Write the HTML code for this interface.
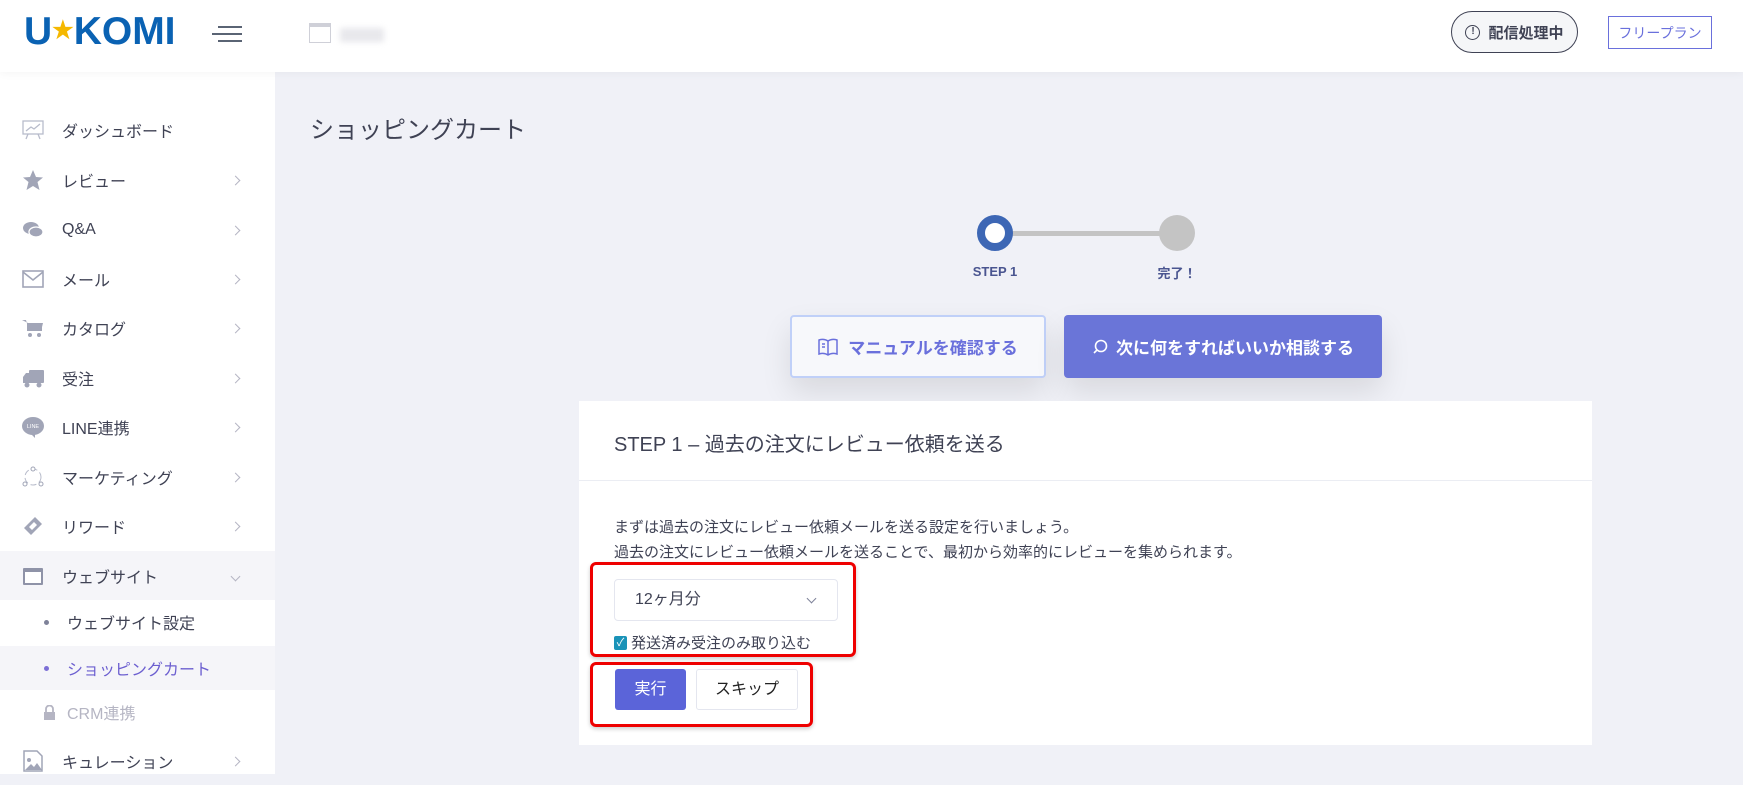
<!DOCTYPE html>
<html><head><meta charset="utf-8"><style>
*{box-sizing:border-box;margin:0;padding:0}
body{width:1743px;height:774px;overflow:hidden;background:#f0f1f7;font-family:"Liberation Sans","Noto Sans CJK JP",sans-serif;color:#3f4254;position:relative}
.abs{position:absolute}
#hdr{left:0;top:0;width:1743px;height:72px;background:#fff;box-shadow:0 2px 8px rgba(0,0,0,.04);z-index:2}
#side{left:0;top:72px;width:275px;height:702px;background:#fff}
.mi{position:absolute;left:0;width:275px;height:49px;display:flex;align-items:center;font-size:16px;color:#3f4254}
.mi .ic{position:absolute;left:22px;width:22px;height:22px}
.mi .tx{position:absolute;left:62px}
.mi .ch{position:absolute;left:232px;color:#b5b5c3;font-size:13px}
.chev{display:inline-block;width:7px;height:7px;border-right:1.3px solid #b5b5c3;border-top:1.3px solid #b5b5c3;transform:rotate(45deg)}
.sub{position:absolute;left:0;width:275px;height:44px;display:flex;align-items:center;font-size:16px}
.sub .dot{position:absolute;left:44px;width:5px;height:5px;border-radius:50%;background:#7e8299}
.sub .tx{position:absolute;left:67px}
</style></head><body>
<div id="hdr" class="abs">
  <div class="abs" style="left:24px;top:10px;font-size:39px;font-weight:bold;color:#0a62b3;letter-spacing:0px;font-family:'Liberation Sans',sans-serif">U<span style="color:#f5b800;font-size:24px;vertical-align:6px">★</span>KOMI</div>
  <div class="abs" style="left:218px;top:26px;width:24px;height:2px;background:#5a6474"></div>
  <div class="abs" style="left:212px;top:33px;width:30px;height:2px;background:#5a6474"></div>
  <div class="abs" style="left:218px;top:40px;width:24px;height:2px;background:#5a6474"></div>
  <div class="abs" style="left:309px;top:23px;width:22px;height:20px;border:1.5px solid #cfd0d8;border-top-width:4px"></div>
  <div class="abs" style="left:340px;top:28px;width:44px;height:14px;background:#e8e8ec;filter:blur(3px)"></div>
  <div class="abs" style="left:1451px;top:11px;width:127px;height:42px;border:1.5px solid #3f4254;border-radius:21px;background:#f5f6f8;display:flex;align-items:center;justify-content:center;font-size:15px;font-weight:bold;color:#3f4254">
    <span style="display:inline-block;width:15px;height:15px;border:1.5px solid #3f4254;border-radius:50%;font-size:10px;line-height:12px;text-align:center;margin-right:8px">!</span>配信処理中</div>
  <div class="abs" style="left:1608px;top:16px;width:104px;height:33px;border:1.5px solid #6a70dc;display:flex;align-items:center;justify-content:center;font-size:14px;color:#6a70dc">フリープラン</div>
</div>
<div id="side" class="abs">
  <div class="mi" style="top:33px"><svg class="ic" viewBox="0 0 22 22"><rect x="1" y="2" width="20" height="13" fill="none" stroke="#b8bccb" stroke-width="1.3"/><path d="M4 12l5-4 3 2 6-5M6 15l-2 5M16 15l2 5" fill="none" stroke="#b8bccb" stroke-width="1.3"/></svg><span class="tx">ダッシュボード</span></div>
  <div class="mi" style="top:83px"><svg class="ic" viewBox="0 0 22 22"><path d="M11 1l3 7 7 .5-5.5 4.5 2 8L11 17l-6.5 4 2-8L1 8.5 8 8z" fill="#a1a5b7"/></svg><span class="tx">レビュー</span><span class="ch"><i class="chev"></i></span></div>
  <div class="mi" style="top:133px"><svg class="ic" viewBox="0 0 22 22"><ellipse cx="9" cy="9" rx="8" ry="6" fill="#a1a5b7"/><ellipse cx="14" cy="13" rx="7" ry="5" fill="#a1a5b7" stroke="#fff" stroke-width="1.3"/></svg><span class="tx">Q&amp;A</span><span class="ch"><i class="chev"></i></span></div>
  <div class="mi" style="top:182px"><svg class="ic" viewBox="0 0 22 22"><rect x="1" y="3" width="20" height="16" fill="none" stroke="#a1a5b7" stroke-width="1.6"/><path d="M1 4l10 8 10-8" fill="none" stroke="#a1a5b7" stroke-width="1.6"/></svg><span class="tx">メール</span><span class="ch"><i class="chev"></i></span></div>
  <div class="mi" style="top:231px"><svg class="ic" viewBox="0 0 22 22"><path d="M0 3h4l3 11h12l2-8H6" fill="#a1a5b7"/><rect x="5" y="6" width="15" height="8" fill="#a1a5b7"/><circle cx="8" cy="18" r="2" fill="#a1a5b7"/><circle cx="17" cy="18" r="2" fill="#a1a5b7"/></svg><span class="tx">カタログ</span><span class="ch"><i class="chev"></i></span></div>
  <div class="mi" style="top:281px"><svg class="ic" viewBox="0 0 22 22"><rect x="7" y="3" width="15" height="13" rx="1" fill="#a1a5b7"/><path d="M1 10l3-4h4v10H1z" fill="#a1a5b7"/><circle cx="5" cy="18" r="2.5" fill="#a1a5b7"/><circle cx="17" cy="18" r="2.5" fill="#a1a5b7"/></svg><span class="tx">受注</span><span class="ch"><i class="chev"></i></span></div>
  <div class="mi" style="top:330px"><svg class="ic" viewBox="0 0 22 22"><ellipse cx="11" cy="10" rx="11" ry="9" fill="#a1a5b7"/><path d="M9 18l4 4v-4z" fill="#a1a5b7"/><text x="11" y="12" font-size="5.5" fill="#fff" text-anchor="middle" font-family="Liberation Sans">LINE</text></svg><span class="tx">LINE連携</span><span class="ch"><i class="chev"></i></span></div>
  <div class="mi" style="top:380px"><svg class="ic" viewBox="0 0 22 22"><circle cx="11" cy="11" r="8" fill="none" stroke="#b8bccb" stroke-width="1" stroke-dasharray="6 3"/><circle cx="11" cy="3" r="2" fill="#fff" stroke="#a1a5b7"/><circle cx="3" cy="18" r="2" fill="#fff" stroke="#a1a5b7"/><circle cx="19" cy="18" r="2" fill="#fff" stroke="#a1a5b7"/></svg><span class="tx">マーケティング</span><span class="ch"><i class="chev"></i></span></div>
  <div class="mi" style="top:429px"><svg class="ic" viewBox="0 0 22 22"><path d="M2 13L13 2l7 7L9 20z" fill="#a1a5b7"/><path d="M7 12l5-5 3 3-5 5z" fill="#fff"/></svg><span class="tx">リワード</span><span class="ch"><i class="chev"></i></span></div>
  <div class="mi" style="top:479px;background:#f5f5f9"><svg class="ic" viewBox="0 0 22 22"><rect x="1" y="3" width="20" height="17" rx="1" fill="#8f93a8"/><rect x="3" y="7" width="16" height="11" fill="#fff"/></svg><span class="tx">ウェブサイト</span><span class="ch"><i class="chev" style="transform:rotate(135deg)"></i></span></div>
  <div class="sub" style="top:528px"><span class="dot"></span><span class="tx">ウェブサイト設定</span></div>
  <div class="sub" style="top:574px;background:#f5f5f9"><span class="dot" style="background:#7c6fd6"></span><span class="tx" style="color:#6c5fd0">ショッピングカート</span></div>
  <div class="sub" style="top:618px;color:#b5b5c3"><svg style="position:absolute;left:43px" width="13" height="15" viewBox="0 0 13 15"><path d="M3 7V4a3.5 3.5 0 017 0v3" fill="none" stroke="#b5b5c3" stroke-width="1.8"/><rect x="1" y="7" width="11" height="8" fill="#b5b5c3"/></svg><span class="tx" style="color:#b5b5c3">CRM連携</span></div>
  <div class="mi" style="top:664px"><svg class="ic" viewBox="0 0 22 22"><path d="M2 1h13l5 5v15H2z" fill="#fff" stroke="#a1a5b7" stroke-width="1.5"/><circle cx="7" cy="10" r="2" fill="#a1a5b7"/><path d="M3 20l6-6 3 3 3-4 5 7z" fill="#a1a5b7"/></svg><span class="tx">キュレーション</span><span class="ch"><i class="chev"></i></span></div>
</div>
<div class="abs" style="left:310px;top:110px;font-size:24px;color:#3f4254">ショッピングカート</div>
<div class="abs" style="left:995px;top:231px;width:182px;height:5px;background:#c4c4c4"></div>
<div class="abs" style="left:977px;top:215px;width:36px;height:36px;border-radius:50%;background:#fff;border:8px solid #3d67b5"></div>
<div class="abs" style="left:1159px;top:215px;width:36px;height:36px;border-radius:50%;background:#c4c4c4"></div>
<div class="abs" style="left:955px;top:264px;width:80px;text-align:center;font-size:13px;font-weight:bold;color:#4a5590">STEP 1</div>
<div class="abs" style="left:1137px;top:263px;width:80px;text-align:center;font-size:13px;font-weight:bold;color:#4a5590">完了！</div>
<div class="abs" style="left:790px;top:315px;width:256px;height:63px;border:2px solid #c0d0f8;border-radius:4px;background:#f7f8fb;box-shadow:0 14px 30px rgba(0,0,0,.1);display:flex;align-items:center;justify-content:center;font-size:17px;font-weight:bold;color:#6a70dc">
<svg width="20" height="20" viewBox="0 0 20 20" style="margin-right:10px"><path d="M10 4C7 2 4 2 1 3v14c3-1 6-1 9 1 3-2 6-2 9-1V3c-3-1-6-1-9 1zM10 4v14M4 7h3M4 10h3" fill="none" stroke="#6a70dc" stroke-width="1.5"/></svg>マニュアルを確認する</div>
<div class="abs" style="left:1064px;top:315px;width:318px;height:63px;border-radius:4px;background:#6a75d8;box-shadow:0 14px 30px rgba(0,0,0,.1);display:flex;align-items:center;justify-content:center;font-size:17px;font-weight:bold;color:#fff">
<svg width="16" height="16" viewBox="0 0 16 16" style="margin-right:8px"><circle cx="9" cy="7" r="5.5" fill="none" stroke="#fff" stroke-width="1.6"/><path d="M5 11l-3 3" stroke="#fff" stroke-width="1.6"/></svg>次に何をすればいいか相談する</div>
<div class="abs" style="left:579px;top:401px;width:1013px;height:344px;background:#fff">
  <div class="abs" style="left:35px;top:27px;font-size:20px;color:#3f4254">STEP 1 – 過去の注文にレビュー依頼を送る</div>
  <div class="abs" style="left:0;top:79px;width:1013px;height:1px;background:#ebedf3"></div>
  <div class="abs" style="left:35px;top:114px;font-size:15px;line-height:25px;color:#3f4254">まずは過去の注文にレビュー依頼メールを送る設定を行いましょう。<br>過去の注文にレビュー依頼メールを送ることで、最初から効率的にレビューを集められます。</div>
  <div class="abs" style="left:11px;top:161px;width:266px;height:95px;border:3px solid #e00;border-radius:6px;box-shadow:0 2px 4px rgba(0,0,0,.2)"></div>
  <div class="abs" style="left:35px;top:178px;width:224px;height:42px;border:1px solid #e4e6ef;border-radius:4px;font-size:16px;line-height:40px;padding-left:20px;color:#3f4254">12ヶ月分<i class="chev" style="position:absolute;right:22px;top:15px;transform:rotate(135deg);border-color:#7e8299"></i></div>
  <div class="abs" style="left:35px;top:231px;font-size:15px;color:#3f4254;display:flex;align-items:center"><span style="display:inline-block;width:13px;height:14px;background:#1a93b8;border-radius:2px;color:#fff;font-size:11px;line-height:14px;text-align:center;margin-right:4px">✓</span>発送済み受注のみ取り込む</div>
  <div class="abs" style="left:11px;top:261px;width:223px;height:65px;border:3px solid #e00;border-radius:6px;box-shadow:0 2px 4px rgba(0,0,0,.2)"></div>
  <div class="abs" style="left:36px;top:268px;width:71px;height:41px;background:#5b64d9;border-radius:3px;color:#fff;font-size:16px;text-align:center;line-height:41px">実行</div>
  <div class="abs" style="left:117px;top:268px;width:102px;height:41px;border:1px solid #e4e6ef;border-radius:3px;color:#222;font-size:16px;text-align:center;line-height:39px">スキップ</div>
</div>
</body></html>
